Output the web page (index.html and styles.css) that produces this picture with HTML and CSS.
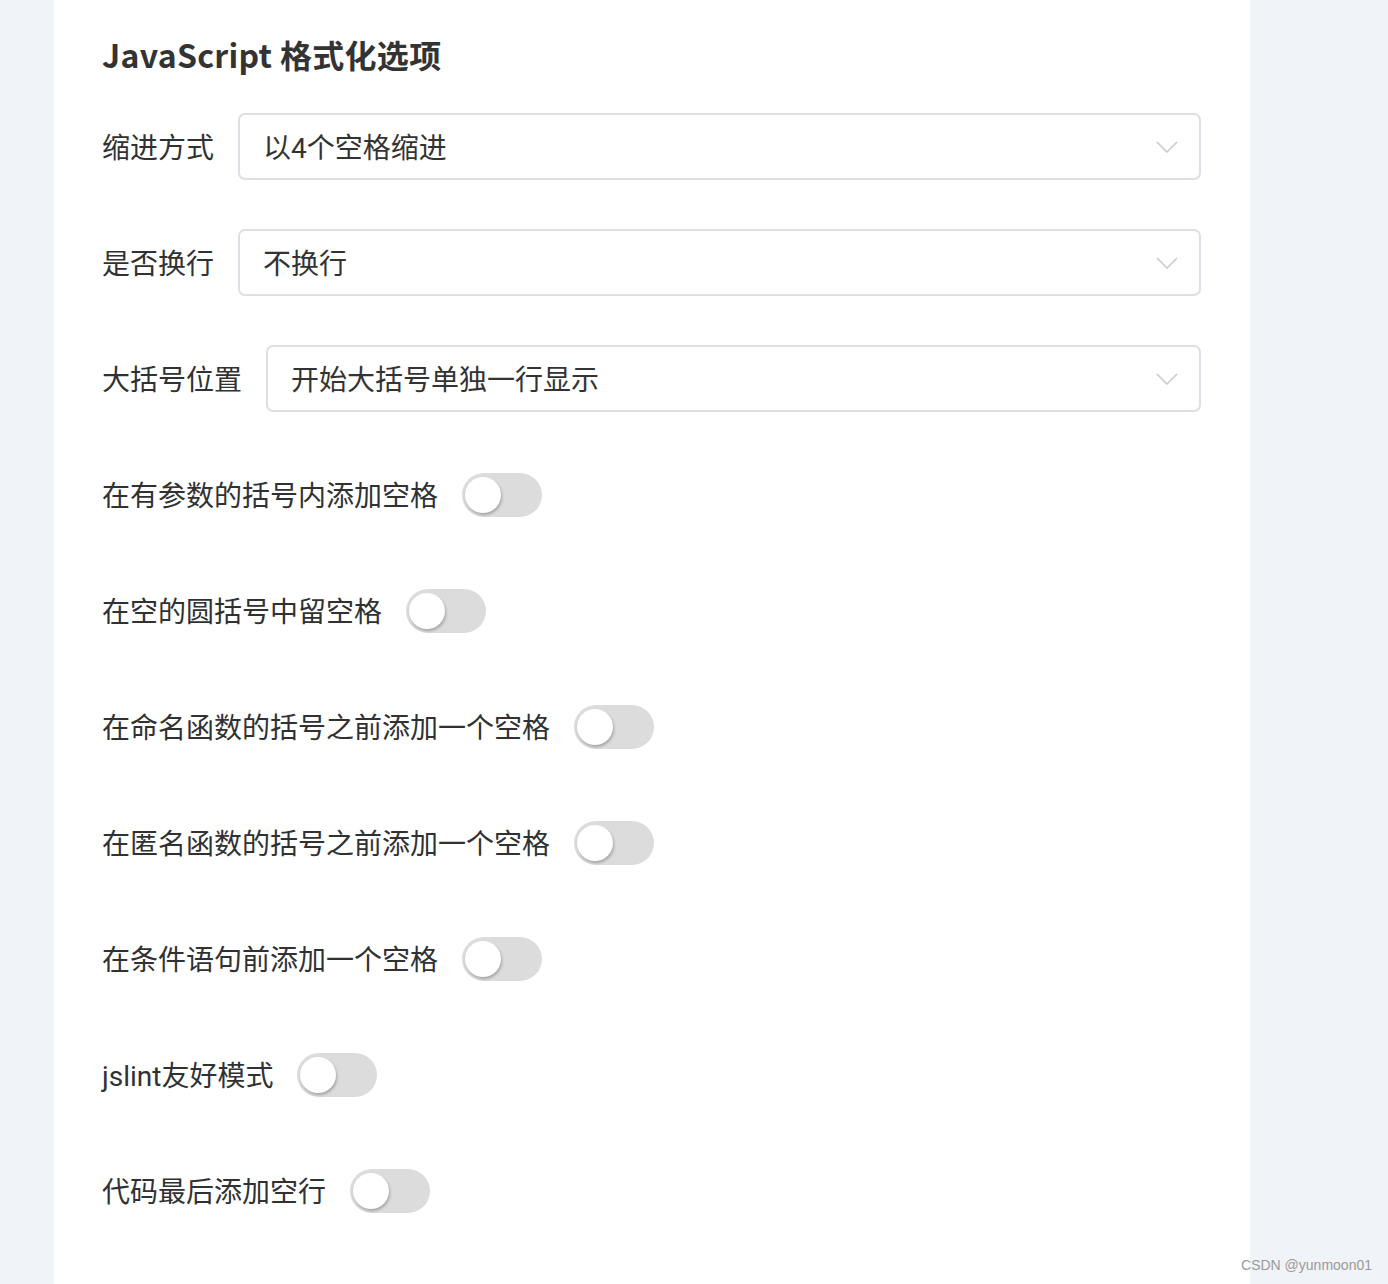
FILE: index.html
```html
<!DOCTYPE html>
<html lang="zh-CN">
<head>
<meta charset="utf-8">
<title>JavaScript 格式化选项</title>
<link rel="stylesheet" href="styles.css">
</head>
<body>
<div class="page">
  <div class="card">
    <h2 class="title">JavaScript 格式化选项</h2>
    <form class="form">
      <div class="row">
        <label class="label">缩进方式</label>
        <div class="select">
          <span class="select-text">以4个空格缩进</span>
          <svg class="chevron" width="22" height="12" viewBox="0 0 22 12"><path d="M1 1 L11 11 L21 1" fill="none" stroke="#c8cbd1" stroke-width="1.6"/></svg>
        </div>
      </div>
      <div class="row">
        <label class="label">是否换行</label>
        <div class="select">
          <span class="select-text">不换行</span>
          <svg class="chevron" width="22" height="12" viewBox="0 0 22 12"><path d="M1 1 L11 11 L21 1" fill="none" stroke="#c8cbd1" stroke-width="1.6"/></svg>
        </div>
      </div>
      <div class="row">
        <label class="label">大括号位置</label>
        <div class="select">
          <span class="select-text">开始大括号单独一行显示</span>
          <svg class="chevron" width="22" height="12" viewBox="0 0 22 12"><path d="M1 1 L11 11 L21 1" fill="none" stroke="#c8cbd1" stroke-width="1.6"/></svg>
        </div>
      </div>
      <div class="row">
        <label class="label">在有参数的括号内添加空格</label>
        <span class="switch"><span class="knob"></span></span>
      </div>
      <div class="row">
        <label class="label">在空的圆括号中留空格</label>
        <span class="switch"><span class="knob"></span></span>
      </div>
      <div class="row">
        <label class="label">在命名函数的括号之前添加一个空格</label>
        <span class="switch"><span class="knob"></span></span>
      </div>
      <div class="row">
        <label class="label">在匿名函数的括号之前添加一个空格</label>
        <span class="switch"><span class="knob"></span></span>
      </div>
      <div class="row">
        <label class="label">在条件语句前添加一个空格</label>
        <span class="switch"><span class="knob"></span></span>
      </div>
      <div class="row">
        <label class="label">jslint友好模式</label>
        <span class="switch"><span class="knob"></span></span>
      </div>
      <div class="row">
        <label class="label">代码最后添加空行</label>
        <span class="switch"><span class="knob"></span></span>
      </div>
    </form>
  </div>
</div>
<div class="watermark">CSDN @yunmoon01</div>
</body>
</html>
```

FILE: styles.css
```css
html, body {
  margin: 0;
  padding: 0;
  background: #f0f3f8;
  font-family: "Noto Sans CJK SC", "Noto Sans", sans-serif;
  color: #303133;
}
.page {
  width: 1388px;
  height: 1284px;
  overflow: hidden;
  padding-left: 54px;
  box-sizing: border-box;
}
.card {
  width: 1196px;
  height: 1284px;
  background: #ffffff;
  box-sizing: border-box;
  padding: 34px 49px 0 48px;
}
.title {
  margin: 0 0 38px 0;
  font-size: 32px;
  line-height: 41px;
  font-weight: 700;
  color: #333333;
  letter-spacing: 0.3px;
}
.form {
  display: flex;
  flex-direction: column;
  gap: 49px;
}
.row {
  display: flex;
  align-items: center;
  height: 67px;
}
.label {
  font-family: Roboto, "Noto Sans CJK SC", sans-serif;
  font-size: 28px;
  line-height: 40px;
  color: #303133;
  padding-right: 24px;
  padding-top: 5px;
  white-space: nowrap;
}
.select {
  flex: 1;
  height: 67px;
  box-sizing: border-box;
  border: 2px solid #dcdfe6;
  border-radius: 7px;
  display: flex;
  align-items: center;
  justify-content: space-between;
  padding: 0 21px 0 23px;
}
.select-text {
  font-family: Roboto, "Noto Sans CJK SC", sans-serif;
  font-size: 28px;
  line-height: 40px;
  padding-top: 5px;
  color: #333333;
}
.chevron {
  display: block;
}
.switch {
  position: relative;
  display: inline-block;
  width: 80px;
  height: 44px;
  border-radius: 22px;
  background: #dcdcdc;
}
.knob {
  position: absolute;
  left: 3px;
  top: 4px;
  width: 36px;
  height: 36px;
  border-radius: 50%;
  background: #ffffff;
  box-shadow: 1px 2px 3px rgba(0, 0, 0, 0.25);
}
.watermark {
  position: absolute;
  right: 16px;
  top: 1257px;
  font-family: "Liberation Sans", Arial, sans-serif;
  font-size: 14px;
  color: #9a9a9a;
}
```
